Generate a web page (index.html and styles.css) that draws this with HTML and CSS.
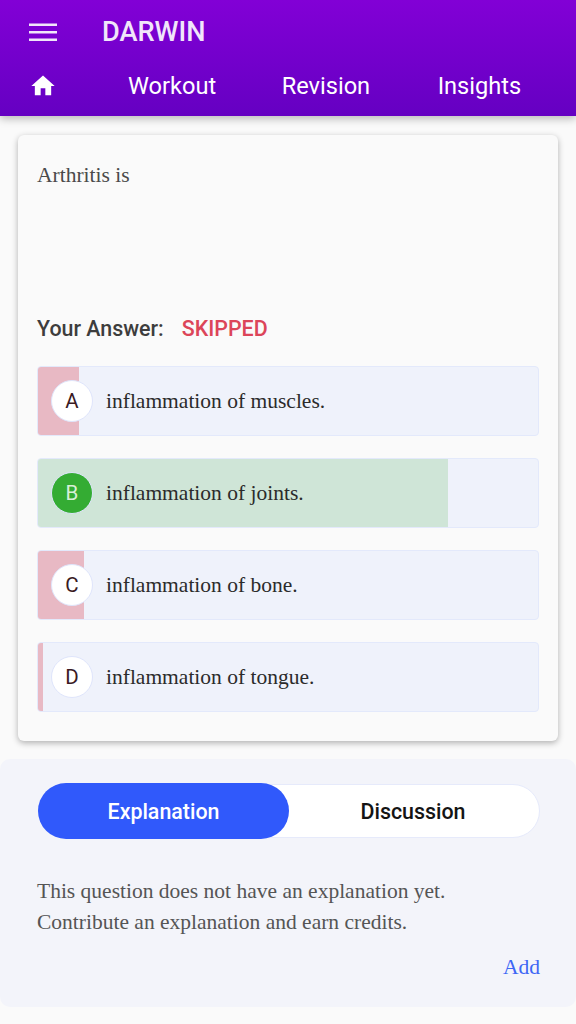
FILE: index.html
```html
<!DOCTYPE html>
<html lang="en">
  <head>
    <meta charset="UTF-8" />
    <meta name="viewport" content="width=device-width, initial-scale=1.0" />
    <title>Darwin</title>
    <link rel="stylesheet" href="styles.css">
  </head>

  <body>
    <header class="app-bar">
      <div class="top-row">
        <svg class="menu-icon" viewBox="0 0 28 20" width="28" height="20" aria-hidden="true">
          <path d="M0 1.4h28v2.7H0zM0 8.9h28v2.7H0zM0 16.4h28v2.7H0z" fill="#f1e6fa" />
        </svg>
        <span class="brand">DARWIN</span>
      </div>
      <nav class="tabs">
        <svg class="home-icon" viewBox="0 0 24 24" width="28" height="28" aria-hidden="true">
          <path d="M10 20v-6h4v6h5v-8h3L12 3 2 12h3v8z" fill="#fff" />
        </svg>
        <a class="tab">Workout</a>
        <a class="tab">Revision</a>
        <a class="tab">Insights</a>
      </nav>
    </header>

    <main class="card">
      <p class="question">Arthritis is</p>
      <div class="answer-line">
        <span class="answer-label">Your Answer:</span>
        <span class="answer-value">SKIPPED</span>
      </div>
      <div class="options">
        <div class="option">
          <div class="fill wrong" style="width: 41px"></div>
          <span class="letter">A</span>
          <span class="option-text">inflammation of muscles.</span>
        </div>
        <div class="option">
          <div class="fill right" style="width: 410px"></div>
          <span class="letter correct">B</span>
          <span class="option-text">inflammation of joints.</span>
        </div>
        <div class="option">
          <div class="fill wrong" style="width: 46px"></div>
          <span class="letter">C</span>
          <span class="option-text">inflammation of bone.</span>
        </div>
        <div class="option">
          <div class="fill wrong" style="width: 5px"></div>
          <span class="letter">D</span>
          <span class="option-text">inflammation of tongue.</span>
        </div>
      </div>
    </main>

    <section class="panel">
      <div class="switch">
        <div class="switch-item active">Explanation</div>
        <div class="switch-item">Discussion</div>
      </div>
      <p class="explain">This question does not have an explanation yet.<br />Contribute an explanation and earn credits.</p>
      <div class="add-row"><a class="add">Add</a></div>
    </section>
  </body>
</html>
```

FILE: styles.css
```css
html,
body {
  padding: 0;
  margin: 0;
}
body {
  width: 576px;
  height: 1024px;
  overflow: hidden;
  background: #fafafa;
  font-family: "Liberation Serif", serif;
}

.app-bar {
  height: 116px;
  background: linear-gradient(to bottom, #8200d6, #6500c2);
  box-shadow: 0 3px 8px rgba(0, 0, 0, 0.25);
  font-family: Roboto, sans-serif;
}
.top-row {
  display: flex;
  align-items: center;
  height: 64px;
  padding-left: 29px;
}
.brand {
  margin-left: 45px;
  font-size: 27.2px;
  font-weight: 500;
  color: #f1e6fa;
}
.tabs {
  display: flex;
  align-items: center;
  height: 44px;
  padding-left: 29px;
}
.tab {
  font-size: 23.6px;
  color: #fff;
}
.tab:nth-of-type(1) {
  margin-left: 71px;
}
.tab:nth-of-type(2) {
  margin-left: 65.5px;
}
.tab:nth-of-type(3) {
  margin-left: 67.5px;
}

.card {
  box-sizing: border-box;
  width: 540px;
  height: 606px;
  margin: 19px 0 0 18px;
  padding: 26px 19px 0;
  border-radius: 6px;
  background: #fafafa;
  box-shadow: 0 2px 6px rgba(0, 0, 0, 0.3);
}
.question {
  margin: 0;
  height: 140px;
  font-size: 21.5px;
  line-height: 28px;
  color: #4a4a4a;
}
.answer-line {
  display: flex;
  gap: 18px;
  height: 65px;
  padding-top: 14px;
  box-sizing: border-box;
  font-family: Roboto, sans-serif;
  font-size: 21.4px;
  font-weight: 500;
  line-height: 28px;
}
.answer-label {
  color: #3d3d3d;
}
.answer-value {
  color: #dc4559;
}

.options {
  display: flex;
  flex-direction: column;
  gap: 22px;
}
.option {
  position: relative;
  box-sizing: border-box;
  display: flex;
  align-items: center;
  height: 70px;
  padding-left: 13px;
  border: 1px solid #e3e9fb;
  border-radius: 4px;
  background: #eff2fb;
  overflow: hidden;
}
.fill {
  position: absolute;
  top: 0;
  bottom: 0;
  left: 0;
}
.fill.wrong {
  background: #e8b9c4;
}
.fill.right {
  background: #cfe5d7;
}
.letter {
  position: relative;
  box-sizing: border-box;
  display: flex;
  align-items: center;
  justify-content: center;
  flex-shrink: 0;
  width: 42px;
  height: 42px;
  border: 1px solid #dfe5fb;
  border-radius: 50%;
  background: #fff;
  font-family: Roboto, sans-serif;
  font-size: 20.5px;
  color: #3a1a24;
}
.letter.correct {
  background: #34ac33;
  color: #d8f0d8;
}
.option-text {
  position: relative;
  margin-left: 13px;
  font-size: 21.5px;
  color: #2b2b2b;
}

.panel {
  box-sizing: border-box;
  height: 248px;
  margin-top: 18px;
  padding: 25px 36px 0 37px;
  border-radius: 10px;
  background: #f3f4fa;
}
.switch {
  box-sizing: border-box;
  display: flex;
  height: 54px;
  margin-left: 1px;
  border: 1px solid #e6eafb;
  border-radius: 27px;
  background: #fff;
  font-family: Roboto, sans-serif;
  font-size: 21.4px;
  font-weight: 500;
}
.switch-item {
  flex: 1;
  display: flex;
  align-items: center;
  justify-content: center;
  padding-right: 2px;
  color: #141414;
}
.switch-item.active {
  flex: none;
  width: 251px;
  margin: -2px 0 -2px -1px;
  padding-right: 0;
  border-radius: 28px;
  background: #3059fb;
  color: #fff;
}
.explain {
  margin: 38px 0 0;
  font-size: 21.5px;
  line-height: 31px;
  color: #555;
}
.add-row {
  display: flex;
  justify-content: flex-end;
  margin-top: 15px;
}
.add {
  font-size: 21.5px;
  line-height: 28px;
  color: #3d66f5;
}
```
